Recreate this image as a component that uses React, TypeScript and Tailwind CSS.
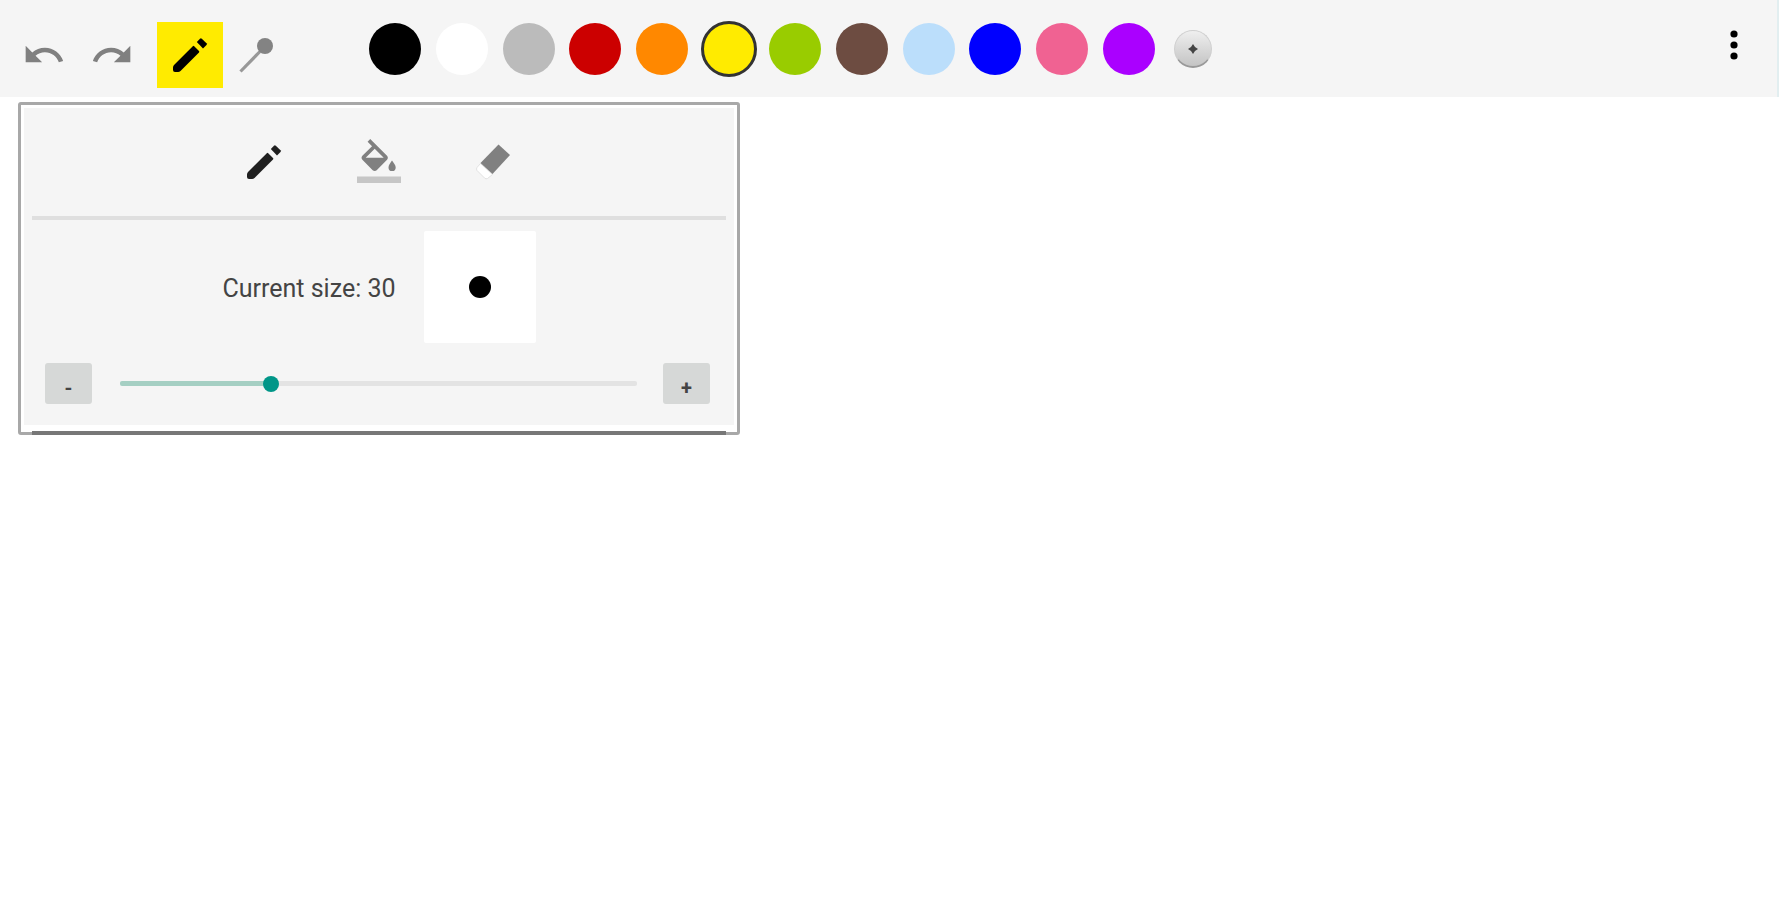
import { useState } from "react";

const colors = [
  { name: "Black", fill: "bg-black" },
  { name: "White", fill: "bg-white" },
  { name: "Gray", fill: "bg-[#bbbbbb]" },
  { name: "Red", fill: "bg-[#cc0000]" },
  { name: "Orange", fill: "bg-[#ff8800]" },
  { name: "Yellow", fill: "bg-[#ffeb00]" },
  { name: "Green", fill: "bg-[#99cc00]" },
  { name: "Brown", fill: "bg-[#6d4c41]" },
  { name: "Light blue", fill: "bg-[#bbdefb]" },
  { name: "Blue", fill: "bg-[#0000ff]" },
  { name: "Pink", fill: "bg-[#f06292]" },
  { name: "Purple", fill: "bg-[#aa00ff]" },
];

function PencilIcon() {
  return (
    <svg viewBox="0 0 48 48" className="size-12" fill="currentColor" aria-hidden="true">
      <path d="M7 36.5Q7 35 8 34L26.8 15.2Q27.5 14.5 28.2 15.2L33 20Q33.6 20.7 33 21.4L14.5 40Q13.5 41 12 41H9Q7 41 7 39Z" />
      <path d="M30.8 11L34 7.7Q34.9 6.9 35.8 7.7L40.5 12.3Q41.3 13.2 40.5 14.1L37 17.4Z" />
    </svg>
  );
}

function UndoIcon() {
  return (
    <svg viewBox="0 0 24 24" className="size-11" fill="currentColor" aria-hidden="true">
      <path d="M12.5 8c-2.65 0-5.05.99-6.9 2.6L2 7v9h9l-3.62-3.62c1.39-1.16 3.16-1.88 5.12-1.88 3.54 0 6.55 2.31 7.6 5.5l2.37-.78C21.08 11.03 17.15 8 12.5 8z" />
    </svg>
  );
}

function RedoIcon() {
  return (
    <svg viewBox="0 0 24 24" className="size-11" fill="currentColor" aria-hidden="true">
      <path d="M18.4 10.6C16.55 8.99 14.15 8 11.5 8c-4.65 0-8.58 3.03-9.96 7.22L3.9 16c1.05-3.19 4.05-5.5 7.6-5.5 1.95 0 3.73.72 5.12 1.88L13 16h9V7l-3.6 3.6z" />
    </svg>
  );
}

function PinIcon() {
  return (
    <svg viewBox="0 0 48 48" className="size-12" aria-hidden="true">
      <path d="M8.5 40.5L28 20.5" stroke="#989898" strokeWidth="3.2" fill="none" />
      <circle cx="33" cy="15" r="8" fill="#838383" />
    </svg>
  );
}

function BucketIcon() {
  return (
    <svg viewBox="0 0 48 48" className="size-12" aria-hidden="true">
      <g fill="#808080">
        <path
          transform="translate(.9 1) scale(1.88)"
          d="M16.56 8.94L7.62 0 6.21 1.41l2.38 2.38-5.15 5.15c-.59.59-.59 1.54 0 2.12l5.5 5.5c.29.29.68.44 1.06.44s.77-.15 1.06-.44l5.5-5.5c.59-.58.59-1.53 0-2.12zM5.21 10L10 5.21 14.79 10H5.21z"
        />
        <path d="M37 22.5C35 25.2 33.5 27.3 33.5 29.4a3.6 3.6 0 0 0 7.2 0C40.7 27.3 39 25.2 37 22.5z" />
      </g>
      <path fill="#c6c6c6" d="M2 38.5h44v6.5H2z" />
    </svg>
  );
}

function EraserIcon() {
  return (
    <svg viewBox="0 0 48 48" className="size-12" aria-hidden="true">
      <path d="M10.5 25.5L22.5 36.5L17.5 40.5Q16 41.3 14.7 40.2L7 32.5Q6 31 7 29.5Z" fill="#fff" stroke="#e2e2e2" />
      <path d="M28.5 6.5L40 17L22.5 36L10.5 25Z" fill="#808080" />
    </svg>
  );
}

export default function App() {
  const [size, setSize] = useState(30);
  const [selected, setSelected] = useState("Yellow");
  const min = 2;
  const max = 100;
  const percent = ((size - min) / (max - min)) * 100;
  const change = (n: number) => setSize(Math.min(max, Math.max(min, n)));
  const stepButton =
    "flex h-[41px] w-[47px] shrink-0 items-center justify-center rounded-[3px] bg-[#d6d8d7] pt-2 text-xl font-bold text-[#444]";

  return (
    <div className="min-h-screen bg-white font-['Roboto',sans-serif] text-[#444]">
      <header className="flex h-[97px] items-center border-r-2 border-[#e2eef0] bg-[#f5f5f5] pt-px pr-[19px] pl-[22px]">
        <div className="flex items-center pt-[11px] text-[#808080]">
          <button aria-label="Undo"><UndoIcon /></button>
          <button aria-label="Redo" className="ml-6"><RedoIcon /></button>
          <button aria-label="Brush" className="ml-[23px] flex size-[66px] items-center justify-center bg-[#ffeb00] text-black">
            <PencilIcon />
          </button>
          <button aria-label="Color picker" className="ml-[9px]"><PinIcon /></button>
        </div>
        <div className="ml-[82px] grid w-[800px] shrink-0 grid-cols-12 justify-items-center">
          {colors.map((c) => (
            <button
              key={c.name}
              aria-label={c.name}
              onClick={() => setSelected(c.name)}
              className={`size-[52px] rounded-full ${c.fill} ${selected === c.name ? "outline-3 -outline-offset-1 outline-[#333]" : ""}`}
            />
          ))}
        </div>
        <button
          aria-label="Add color"
          className="ml-3 flex size-[38px] items-center justify-center rounded-full border border-b-2 border-[#cfcfcf] border-b-[#999] bg-linear-to-b from-[#efefef] to-[#c4c4c4]"
        >
          <svg viewBox="0 0 12 12" className="size-3" aria-hidden="true">
            <path d="M6 1L8 4L11 6L8 8L6 11L4 8L1 6L4 4Z" fill="#444" />
          </svg>
        </button>
        <button aria-label="More options" className="ml-auto flex h-12 w-12 items-center justify-center pb-2">
          <svg viewBox="0 0 8 32" className="h-8 w-2" aria-hidden="true">
            <circle cx="4" cy="5" r="3.6" />
            <circle cx="4" cy="16" r="3.6" />
            <circle cx="4" cy="27" r="3.6" />
          </svg>
        </button>
      </header>

      <main className="px-[18px] pt-[5px]">
        <section className="w-full max-w-[722px] rounded-[3px] border-3 border-[#a8a8a8] bg-white px-[3px] pt-[3px]">
          <div className="bg-[#f5f5f5] px-2">
            <div className="flex h-28 items-center justify-center gap-[67px] border-b-4 border-[#dfdfdf]">
              <button aria-label="Draw" className="text-[#1f1f1f]"><PencilIcon /></button>
              <button aria-label="Fill"><BucketIcon /></button>
              <button aria-label="Erase"><EraserIcon /></button>
            </div>
            <div className="flex items-center justify-center gap-7 pt-[11px]">
              <label htmlFor="size" className="pt-1 text-[25px]">Current size: {size}</label>
              <div className="flex size-28 items-center justify-center rounded-xs bg-white">
                <span className="size-[22px] rounded-full bg-black" />
              </div>
            </div>
            <div className="flex items-center pt-5 pr-4 pb-[21px] pl-[13px]">
              <button aria-label="Decrease size" onClick={() => change(size - 1)} className={stepButton}>-</button>
              <input
                id="size"
                type="range"
                min={min}
                max={max}
                value={size}
                onChange={(e) => change(Number(e.target.value))}
                style={{ backgroundImage: `linear-gradient(to right, #a5cfc3 ${percent}%, #e3e3e3 ${percent}%)` }}
                className="mr-[26px] ml-7 h-[5px] min-w-0 flex-1 appearance-none rounded-xs [&::-webkit-slider-thumb]:size-4 [&::-webkit-slider-thumb]:appearance-none [&::-webkit-slider-thumb]:rounded-full [&::-webkit-slider-thumb]:bg-[#009688]"
              />
              <button aria-label="Increase size" onClick={() => change(size + 1)} className={stepButton}>+</button>
            </div>
          </div>
          <div className="mx-2 mt-[6px] -mb-[3px] h-1 bg-[#777]" />
        </section>
      </main>
    </div>
  );
}
